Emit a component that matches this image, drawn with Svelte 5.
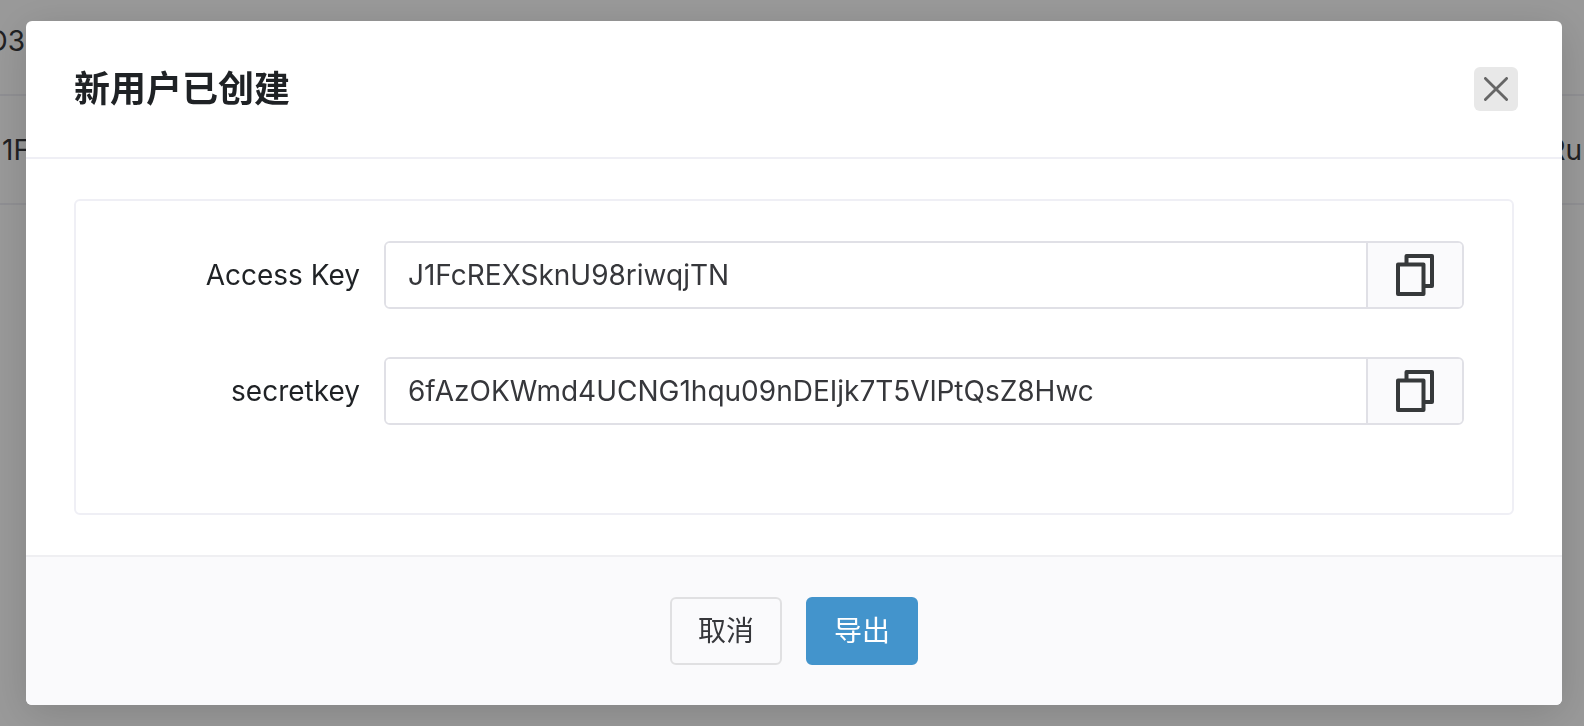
<script lang="ts">
  interface Credential {
    id: string;
    label: string;
    value: string;
  }

  const rows = [
    { key: 'D3', status: '' },
    { key: '1F', status: 'Ru' },
  ];

  const credentials: Credential[] = [
    { id: 'access-key', label: 'Access Key', value: 'J1FcREXSknU98riwqjTN' },
    {
      id: 'secret-key',
      label: 'secretkey',
      value: '6fAzOKWmd4UCNG1hqu09nDEIjk7T5VlPtQsZ8Hwc',
    },
  ];

  let open = $state(true);

  function close() {
    open = false;
  }

  function copy(value: string) {
    navigator.clipboard?.writeText(value);
  }

  function exportKeys() {
    const blob = new Blob([JSON.stringify(credentials, null, 2)]);
    const link = document.createElement('a');
    link.href = URL.createObjectURL(blob);
    link.download = 'credentials.json';
    link.click();
  }
</script>

<div class="page">
  {#each rows as row}
    <div class="row">
      <span class="row-key">{row.key}</span>
      <span class="row-status">{row.status}</span>
    </div>
  {/each}
</div>

{#if open}
  <div class="overlay">
    <div class="dialog" role="dialog" aria-modal="true" aria-labelledby="dialog-title">
      <header class="dialog-header">
        <h2 id="dialog-title">新用户已创建</h2>
        <button type="button" class="close" aria-label="关闭" onclick={close}>
          <svg width="24" height="24" viewBox="0 0 24 24" fill="none" stroke="currentColor">
            <path d="M1.4 1.4l21.2 21.2M22.6 1.4L1.4 22.6" stroke-width="2.8" stroke-linecap="round" />
          </svg>
        </button>
      </header>

      <div class="dialog-body">
        <div class="panel">
          {#each credentials as item (item.id)}
            <div class="field">
              <label for={item.id}>{item.label}</label>
              <div class="input-group">
                <input id={item.id} type="text" value={item.value} readonly />
                <button
                  type="button"
                  class="copy"
                  aria-label="复制 {item.label}"
                  onclick={() => copy(item.value)}
                >
                  <svg width="38" height="42" viewBox="0 0 38 42" fill="none" stroke="currentColor">
                    <path
                      d="M10.5 9V2H36v30h-7"
                      stroke-width="4"
                      stroke-linejoin="round"
                    />
                    <path
                      d="M2 10.5h25.5V40H2z"
                      stroke-width="4"
                      stroke-linejoin="round"
                    />
                  </svg>
                </button>
              </div>
            </div>
          {/each}
        </div>
      </div>

      <footer class="dialog-footer">
        <button type="button" class="btn" onclick={close}>取消</button>
        <button type="button" class="btn primary" onclick={exportKeys}>导出</button>
      </footer>
    </div>
  </div>
{/if}

<style>
  :global(body) {
    background: #fff;
    font-family: Inter, 'Noto Sans CJK SC', sans-serif;
    font-size: 28px;
    color: #36373b;
  }

  button,
  input {
    font: inherit;
    color: inherit;
    box-sizing: border-box;
  }

  button {
    cursor: pointer;
  }

  .page {
    min-height: 100vh;
    overflow: hidden;
    box-sizing: border-box;
  }

  .row {
    display: flex;
    justify-content: space-between;
    align-items: center;
    height: 109px;
    padding-right: 2px;
    box-sizing: border-box;
    border-bottom: 2px solid #efeff5;
  }

  .row:first-child {
    height: 96px;
    padding-bottom: 12px;
  }

  .row-key {
    display: flex;
    justify-content: flex-end;
    width: 30px;
  }

  .row:first-child .row-key {
    width: 25px;
  }

  .overlay {
    position: fixed;
    inset: 0;
    padding: 21px 22px 21px 26px;
    background: rgba(0, 0, 0, 0.4);
    overflow: hidden;
  }

  .dialog {
    background: #fff;
    border-radius: 6px;
    box-shadow: 0 8px 40px rgba(0, 0, 0, 0.15);
    overflow: hidden;
  }

  .dialog-header {
    display: flex;
    justify-content: space-between;
    align-items: center;
    padding: 41px 44px 41px 48px;
    border-bottom: 2px solid #efeff5;
  }

  h2 {
    margin: 0;
    font-size: 36px;
    line-height: 54px;
    font-weight: 600;
    color: #1f2225;
  }

  .close {
    display: flex;
    align-items: center;
    justify-content: center;
    width: 44px;
    height: 44px;
    padding: 0;
    border: none;
    border-radius: 6px;
    background: #e8e8e8;
    color: #666;
  }

  .dialog-body {
    padding: 40px 48px;
  }

  .panel {
    padding: 40px 48px;
    border: 2px solid #efeff5;
    border-radius: 6px;
  }

  .field {
    display: flex;
    align-items: center;
    margin-bottom: 48px;
  }

  label {
    flex: none;
    width: 260px;
    padding-right: 24px;
    box-sizing: border-box;
    text-align: right;
    color: #1f2225;
  }

  .input-group {
    display: flex;
    flex: 1;
    height: 68px;
    box-sizing: border-box;
    border: 2px solid #e0e0e6;
    border-radius: 6px;
    overflow: hidden;
  }

  input {
    flex: 1;
    min-width: 0;
    padding: 0 22px;
    border: none;
    outline: none;
    background: #fff;
  }

  .copy {
    display: flex;
    align-items: center;
    justify-content: center;
    width: 96px;
    padding: 0;
    border: none;
    border-left: 2px solid #e0e0e6;
    background: #fafafc;
    color: #36393b;
  }

  .dialog-footer {
    display: flex;
    justify-content: center;
    gap: 24px;
    padding: 40px;
    border-top: 2px solid #efeff2;
    background: #fafafc;
  }

  .btn {
    height: 68px;
    padding: 0 26px;
    border: 2px solid #e0e0e2;
    border-radius: 6px;
    background: transparent;
    line-height: 1;
  }

  .btn.primary {
    border-color: #4394cc;
    background: #4394cc;
    color: #fff;
  }
</style>
